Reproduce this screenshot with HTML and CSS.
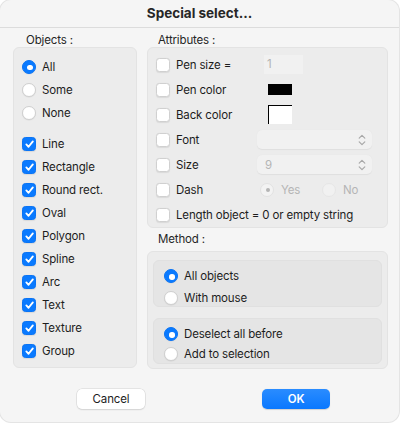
FILE: index.html
```html
<!DOCTYPE html>
<html>
<head>
<meta charset="utf-8">
<link rel="stylesheet" href="styles.css">
</head>
<body>
<div class="dialog">
  <div class="titlebar">Special select...</div>
  <div class="content">
    <div class="col-left">
      <div class="label">Objects :</div>
      <div class="panel objects">
        <div class="row"><span class="radio on"></span><span>All</span></div>
        <div class="row"><span class="radio"></span><span>Some</span></div>
        <div class="row"><span class="radio"></span><span>None</span></div>
        <div class="spacer"></div>
        <div class="row"><span class="check on"><svg viewBox="0 0 14 14"><path d="M3.6 7.4 L6 10 L10.6 4.2"/></svg></span><span>Line</span></div>
        <div class="row"><span class="check on"><svg viewBox="0 0 14 14"><path d="M3.6 7.4 L6 10 L10.6 4.2"/></svg></span><span>Rectangle</span></div>
        <div class="row"><span class="check on"><svg viewBox="0 0 14 14"><path d="M3.6 7.4 L6 10 L10.6 4.2"/></svg></span><span>Round rect.</span></div>
        <div class="row"><span class="check on"><svg viewBox="0 0 14 14"><path d="M3.6 7.4 L6 10 L10.6 4.2"/></svg></span><span>Oval</span></div>
        <div class="row"><span class="check on"><svg viewBox="0 0 14 14"><path d="M3.6 7.4 L6 10 L10.6 4.2"/></svg></span><span>Polygon</span></div>
        <div class="row"><span class="check on"><svg viewBox="0 0 14 14"><path d="M3.6 7.4 L6 10 L10.6 4.2"/></svg></span><span>Spline</span></div>
        <div class="row"><span class="check on"><svg viewBox="0 0 14 14"><path d="M3.6 7.4 L6 10 L10.6 4.2"/></svg></span><span>Arc</span></div>
        <div class="row"><span class="check on"><svg viewBox="0 0 14 14"><path d="M3.6 7.4 L6 10 L10.6 4.2"/></svg></span><span>Text</span></div>
        <div class="row"><span class="check on"><svg viewBox="0 0 14 14"><path d="M3.6 7.4 L6 10 L10.6 4.2"/></svg></span><span>Texture</span></div>
        <div class="row"><span class="check on"><svg viewBox="0 0 14 14"><path d="M3.6 7.4 L6 10 L10.6 4.2"/></svg></span><span>Group</span></div>
      </div>
    </div>
    <div class="col-right">
      <div class="label">Attributes :</div>
      <div class="panel attrs">
        <div class="arow"><span class="check"></span><span class="alabel">Pen size =</span><span class="field">1</span></div>
        <div class="arow"><span class="check"></span><span class="alabel">Pen color</span><span class="swatch black"></span></div>
        <div class="arow"><span class="check"></span><span class="alabel">Back color</span><span class="swatch white"></span></div>
        <div class="arow"><span class="check"></span><span class="alabel">Font</span><span class="popup"><span class="ptext"></span><svg class="chev" viewBox="0 0 8 12"><path d="M1.2 4.2 L4 1.4 L6.8 4.2 M1.2 7.8 L4 10.6 L6.8 7.8"/></svg></span></div>
        <div class="arow"><span class="check"></span><span class="alabel">Size</span><span class="popup"><span class="ptext">9</span><svg class="chev" viewBox="0 0 8 12"><path d="M1.2 4.2 L4 1.4 L6.8 4.2 M1.2 7.8 L4 10.6 L6.8 7.8"/></svg></span></div>
        <div class="arow"><span class="check"></span><span class="alabel">Dash</span><span class="dash"><span class="dopt"><span class="radio dis on"></span><span>Yes</span></span><span class="dopt"><span class="radio dis"></span><span>No</span></span></span></div>
        <div class="arow"><span class="check"></span><span class="alabel wide">Length object = 0 or empty string</span></div>
      </div>
      <div class="label method-label">Method :</div>
      <div class="panel method">
        <div class="inner first">
          <div class="mrow"><span class="radio on"></span><span>All objects</span></div>
          <div class="mrow"><span class="radio"></span><span>With mouse</span></div>
        </div>
        <div class="inner second">
          <div class="mrow"><span class="radio on"></span><span>Deselect all before</span></div>
          <div class="mrow"><span class="radio"></span><span>Add to selection</span></div>
        </div>
      </div>
    </div>
  </div>
  <div class="buttons">
    <button class="btn cancel">Cancel</button>
    <button class="btn ok">OK</button>
  </div>
</div>
</body>
</html>
```
FILE: styles.css
```css
html, body {
  margin: 0;
  padding: 0;
  background: #ffffff;
}
body {
  width: 400px;
  height: 424px;
  font-family: Inter, "Liberation Sans", sans-serif;
  font-size: 11.5px;
  letter-spacing: -0.15px;
  color: #1d1d1d;
}
.dialog {
  width: 399px;
  height: 422px;
  box-sizing: border-box;
  background: #f5f5f5;
  border-radius: 11px;
  box-shadow: 0 0 0 1px #e4e4e4;
  display: flex;
  flex-direction: column;
  overflow: hidden;
}
.titlebar {
  height: 28px;
  box-sizing: border-box;
  border-bottom: 1px solid #dcdcdc;
  text-align: center;
  font-weight: 700;
  font-size: 13.5px;
  letter-spacing: 0;
  line-height: 27px;
  color: #262626;
}
.content {
  display: flex;
  gap: 10px;
  padding: 0 11px 0 13px;
}
.col-left {
  width: 124px;
  display: flex;
  flex-direction: column;
}
.col-right {
  flex: 1;
  display: flex;
  flex-direction: column;
}
.label {
  height: 19px;
  line-height: 24px;
  color: #262626;
}
.col-left .label { padding-left: 13px; }
.col-right .label { padding-left: 11px; }
.panel {
  background: #ececec;
  border: 1px solid #e3e3e3;
  border-radius: 6px;
  box-sizing: border-box;
}
.objects {
  height: 321px;
  padding: 7px 0 0 8px;
}
.row {
  height: 23px;
  display: flex;
  align-items: center;
  gap: 6px;
}
.spacer { height: 8px; }
.radio {
  width: 14px;
  height: 14px;
  border-radius: 50%;
  box-sizing: border-box;
  background: #ffffff;
  border: 0.5px solid #cfcfcf;
  box-shadow: 0 0.5px 1px rgba(0,0,0,0.08);
  flex: none;
  position: relative;
}
.radio.on {
  background: #0a7aff;
  border-color: #0a74f5;
}
.radio.on::after {
  content: "";
  position: absolute;
  left: 4px;
  top: 4px;
  width: 5.5px;
  height: 5.5px;
  border-radius: 50%;
  background: #ffffff;
}
.radio.dis {
  background: #f1f1f1;
  border-color: #e6e6e6;
  box-shadow: none;
}
.radio.dis.on { background: #f3f3f3; border-color: #e2e2e2; }
.radio.dis.on::after { background: #b5b5b5; left: 4.5px; top: 4.5px; width: 4px; height: 4px; }
.check {
  width: 14px;
  height: 14px;
  border-radius: 3.5px;
  box-sizing: border-box;
  background: #ffffff;
  border: 0.5px solid #d0d0d0;
  box-shadow: 0 0.5px 1px rgba(0,0,0,0.08);
  flex: none;
  display: flex;
}
.check.on {
  background: #0a7aff;
  border-color: #0a74f5;
}
.check svg {
  width: 14px;
  height: 14px;
  margin: -0.5px;
}
.check svg path {
  fill: none;
  stroke: #ffffff;
  stroke-width: 2;
  stroke-linecap: round;
  stroke-linejoin: round;
}
.attrs {
  height: 181px;
  padding: 4px 0 0 8px;
}
.arow {
  height: 25px;
  display: flex;
  align-items: center;
}
.arow .check { margin-right: 6px; }
.alabel {
  width: 81px;
  flex: none;
  white-space: nowrap;
}
.alabel.wide { width: auto; }
.field {
  margin-left: 7px;
  width: 39px;
  height: 19px;
  box-sizing: border-box;
  background: #f1f1f1;
  color: #b3b3b3;
  line-height: 19px;
  padding-left: 3px;
}
.swatch {
  margin-left: 11px;
  width: 24px;
  box-sizing: border-box;
}
.swatch.black {
  height: 11px;
  background: #000000;
}
.swatch.white {
  height: 19px;
  background: #ffffff;
  border-left: 1px solid #000;
  border-top: 1px solid #000;
}
.popup {
  width: 115px;
  height: 19px;
  box-sizing: border-box;
  background: #f1f1f1;
  border-radius: 5px;
  box-shadow: 0 0.5px 1px rgba(0,0,0,0.06);
  display: flex;
  align-items: center;
  padding: 0 6px 0 8px;
  color: #b5b5b5;
}
.ptext { flex: 1; }
.chev {
  width: 8px;
  height: 12px;
}
.chev path {
  fill: none;
  stroke: #a8a8a8;
  stroke-width: 1.2;
  stroke-linecap: round;
  stroke-linejoin: round;
}
.dash {
  display: flex;
  margin-left: 3px;
  color: #b5b5b5;
}
.dopt {
  display: flex;
  align-items: center;
  gap: 7px;
  width: 62px;
}
.method-label {
  margin-top: 4px;
  height: 19px;
  line-height: 15px;
}
.method {
  height: 118px;
  padding: 8px 5px 0 5px;
  display: flex;
  flex-direction: column;
  gap: 11px;
}
.inner {
  background: #e5e5e5;
  border: 1px solid #e0e0e0;
  border-radius: 6px;
  padding-left: 10px;
}
.inner.first { height: 47px; padding-top: 4px; box-sizing: border-box; }
.inner.second { height: 46px; padding-top: 5px; box-sizing: border-box; }
.mrow {
  display: flex;
  align-items: center;
  gap: 6px;
}
.first .mrow { height: 22px; }
.second .mrow { height: 20px; }
.buttons {
  display: flex;
  padding: 20px 0 0 77px;
  gap: 117px;
}
.btn {
  width: 68px;
  height: 20px;
  border-radius: 5px;
  font-family: Inter, "Liberation Sans", sans-serif;
  font-size: 11.5px;
  letter-spacing: -0.15px;
  padding: 0;
  border: none;
}
.cancel {
  background: #ffffff;
  color: #1d1d1d;
  box-shadow: 0 0 0 0.5px #d4d4d4, 0 1px 1.5px rgba(0,0,0,0.12);
}
.ok {
  background: linear-gradient(#2a8cff, #0a78ff);
  color: #ffffff;
  font-weight: 600;
  box-shadow: 0 0.5px 1px rgba(0,0,0,0.15);
}
```
